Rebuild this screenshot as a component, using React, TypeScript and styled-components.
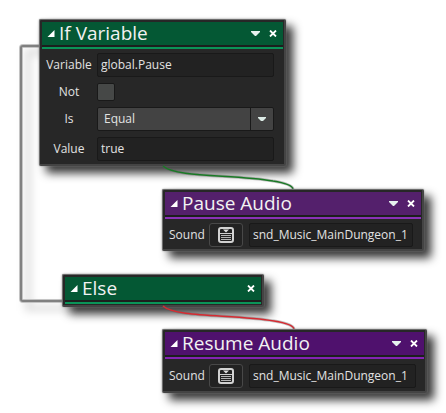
import React, { useId, useState } from "react";
import styled, { createGlobalStyle } from "styled-components";

const GlobalStyle = createGlobalStyle`
  * { box-sizing: border-box; }
  body {
    margin: 0;
    background: #fff;
    font-family: "Open Sans", "Noto Sans", sans-serif;
  }
  button, input, select { font: inherit; color: inherit; margin: 0; }
`;

type Tone = "green" | "purple" | "violet";

const tones: Record<Tone, { header: string; accent: string }> = {
  green: { header: "#045834", accent: "#0a9458" },
  purple: { header: "#54206c", accent: "#8a32b8" },
  violet: { header: "#4f116d", accent: "#8424b4" },
};

const Canvas = styled.main`
  position: relative;
  min-height: 100vh;
  overflow: hidden;
`;

const Wires = styled.svg`
  position: absolute;
  top: 0;
  left: 0;
  overflow: visible;
  pointer-events: none;
`;

const Node = styled.section<{ $x: number; $y: number; $w: number }>`
  position: absolute;
  left: ${(p) => p.$x}px;
  top: ${(p) => p.$y}px;
  width: ${(p) => p.$w}px;
  padding: 2px 1px 1px 2px;
  border-style: solid;
  border-width: 1px 2px 2px 1px;
  border-color: #6c6c6c #444 #444 #6c6c6c;
  border-radius: 2px;
  background: #272727;
  color: #e2e2e2;
  box-shadow: 0 0 2px #888, 7px 7px 10px rgba(0, 0, 0, 0.8);
`;

const Header = styled.header<{ $tone: Tone }>`
  display: flex;
  align-items: center;
  height: 27px;
  padding: 0 6px 2px 5px;
  background: ${(p) => tones[p.$tone].header};
  border-bottom: 2px solid ${(p) => tones[p.$tone].accent};
  box-shadow: inset 0 -2px #1c1f1e;
  color: #f2f2f2;
`;

const IconButton = styled.button`
  display: flex;
  padding: 0;
  border: 0;
  background: none;
  cursor: pointer;
`;

const Title = styled.h2`
  flex: 1;
  margin: 0 0 2px 4px;
  font-size: 19px;
  line-height: 22px;
  font-weight: 400;
  white-space: nowrap;
`;

const Actions = styled.div`
  display: flex;
  align-items: center;
  gap: 9px;
`;

const Form = styled.div`
  display: grid;
  grid-template-columns: 46px minmax(0, 1fr);
  grid-template-rows: 24px 18px 24px 24px;
  align-items: center;
  gap: 6px 5px;
  padding: 4px 9px 2px 4px;
  font-size: 12px;
`;

const Label = styled.label`
  min-width: 34px;
  padding-bottom: 1px;
  text-align: center;
  white-space: nowrap;
`;

const TextInput = styled.input`
  width: 100%;
  min-width: 0;
  height: 24px;
  padding: 0 3px 2px;
  border: 1px solid #191919;
  border-radius: 2px;
  background: #222;
  outline: none;
`;

const CheckBox = styled.input`
  appearance: none;
  width: 18px;
  height: 18px;
  border: 1px solid #191919;
  border-radius: 2px;
  background: #464847;
  &:checked { background: #0a9458; }
`;

const SelectBox = styled.div`
  display: grid;
  grid-template-columns: minmax(0, 1fr) 23px;
  align-items: center;
  height: 24px;
  border: 1px solid #191919;
  border-radius: 2px;
  background: #434343;
`;

const Select = styled.select`
  grid-row: 1;
  grid-column: 1 / 3;
  width: 100%;
  height: 22px;
  padding: 0 6px 1px;
  appearance: none;
  border: 0;
  background: none;
  outline: none;
`;

const SelectArrow = styled.span`
  grid-row: 1;
  grid-column: 2;
  display: flex;
  align-items: center;
  justify-content: center;
  height: 22px;
  border-left: 1px solid #191919;
  pointer-events: none;
`;

const SoundRow = styled.div<{ $roomy?: boolean }>`
  display: flex;
  align-items: center;
  gap: 6px;
  padding: ${(p) => (p.$roomy ? "5px 8px 2px 4px" : "4px 8px 1px 4px")};
  font-size: 12px;
`;

const PickButton = styled.button`
  display: flex;
  flex: none;
  align-items: center;
  justify-content: center;
  width: 34px;
  height: 24px;
  padding: 0;
  border: 1px solid #484848;
  border-radius: 3px;
  background: #222;
`;

const Collapse = () => (
  <IconButton aria-label="Collapse">
    <svg width="8" height="8" viewBox="0 0 8 8">
      <path d="M7.500 0v7H.5z" fill="#fff" />
    </svg>
  </IconButton>
);

const Down = () => (
  <svg width="9" height="5" viewBox="0 0 9 5">
    <path d="M0 0h9v1L5 5H4L0 1z" fill="#e6f2ee" />
  </svg>
);

const SmallDown = () => (
  <svg width="8" height="4" viewBox="0 0 8 4">
    <path d="M0 0h8v1L5 4H3L0 1z" fill="#dcebe6" />
  </svg>
);

const Close = () => (
  <svg width="8" height="7" viewBox="0 0 8 7">
    <path d="M1 .5l6 6M7 .5l-6 6" stroke="#fff" strokeWidth="1.8" />
  </svg>
);

const ListIcon = () => (
  <svg width="16" height="16" viewBox="0 0 16 16" fill="none">
    <rect x="1" y="1" width="14" height="14" rx="2" fill="#222" stroke="#d2d2d2" strokeWidth="2" />
    <path d="M2 6.500h12" stroke="#d0d0d0" />
    <path d="M3 8.500h10M3 10.500h10M3 12.500h10" stroke="#b4b4b4" strokeWidth="1.2" />
    <path d="M5 2.500h6L8 5.500z" fill="#dedede" />
  </svg>
);

interface NodeHeaderProps {
  title: string;
  tone: Tone;
  menu?: boolean;
}

const NodeHeader = ({ title, tone, menu }: NodeHeaderProps) => (
  <Header $tone={tone}>
    <Collapse />
    <Title>{title}</Title>
    <Actions>
      {menu && (
        <IconButton aria-label="Options">
          <Down />
        </IconButton>
      )}
      <IconButton aria-label="Close">
        <Close />
      </IconButton>
    </Actions>
  </Header>
);

const SoundField = ({ roomy }: { roomy?: boolean }) => {
  const id = useId();
  const [sound, setSound] = useState("snd_Music_MainDungeon_1");
  return (
    <SoundRow $roomy={roomy}>
      <Label htmlFor={id}>Sound</Label>
      <PickButton aria-label="Choose sound">
        <ListIcon />
      </PickButton>
      <TextInput id={id} value={sound} onChange={(e) => setSound(e.target.value)} />
    </SoundRow>
  );
};

const Wire = ({ d, color }: { d: string; color: string }) => (
  <>
    <path d={d} stroke="#555" strokeOpacity="0.35" strokeWidth="3" />
    <path d={d} stroke={color} strokeWidth="1.4" />
  </>
);

export default function App() {
  return (
    <>
      <GlobalStyle />
      <Canvas>
        <Wires width="446" height="413" fill="none">
          <defs>
            <filter id="soft" x="-50%" y="-10%" width="200%" height="130%">
              <feGaussianBlur stdDeviation="4" />
            </filter>
          </defs>
          <path d="M48 52H28V308H70" stroke="#000" strokeOpacity="0.14" strokeWidth="6" filter="url(#soft)" />
          <path d="M40 46H23Q21 46 21 48V299Q21 301 23 301H63" stroke="#c4c4c4" strokeWidth="4" />
          <path d="M40 46H23Q21 46 21 48V299Q21 301 23 301H63" stroke="#808080" strokeWidth="2" />
        </Wires>

        <Node $x={39} $y={19} $w={247}>
          <NodeHeader title="If Variable" tone="green" menu />
          <Form>
            <Label htmlFor="variable">Variable</Label>
            <TextInput id="variable" defaultValue="global.Pause" />
            <Label htmlFor="not">Not</Label>
            <CheckBox id="not" type="checkbox" />
            <Label htmlFor="is">Is</Label>
            <SelectBox>
              <Select id="is" defaultValue="Equal">
                <option>Equal</option>
                <option>Less</option>
                <option>Greater</option>
              </Select>
              <SelectArrow>
                <SmallDown />
              </SelectArrow>
            </SelectBox>
            <Label htmlFor="value">Value</Label>
            <TextInput id="value" defaultValue="true" />
          </Form>
        </Node>
        <Node $x={62} $y={274} $w={202}>
          <NodeHeader title="Else" tone="green" />
        </Node>

        <Wires width="446" height="413" fill="none">
          <Wire d="M163 166C176 178 235 174 273 181Q292 184 293 189" color="#197a25" />
          <Wire d="M163 306C176 318 235 314 274 321Q293 324 294 329" color="#d62b32" />
        </Wires>

        <Node $x={162} $y={189} $w={262}>
          <NodeHeader title="Pause Audio" tone="purple" menu />
          <SoundField />
        </Node>
        <Node $x={162} $y={329} $w={265}>
          <NodeHeader title="Resume Audio" tone="violet" menu />
          <SoundField roomy />
        </Node>
      </Canvas>
    </>
  );
}
